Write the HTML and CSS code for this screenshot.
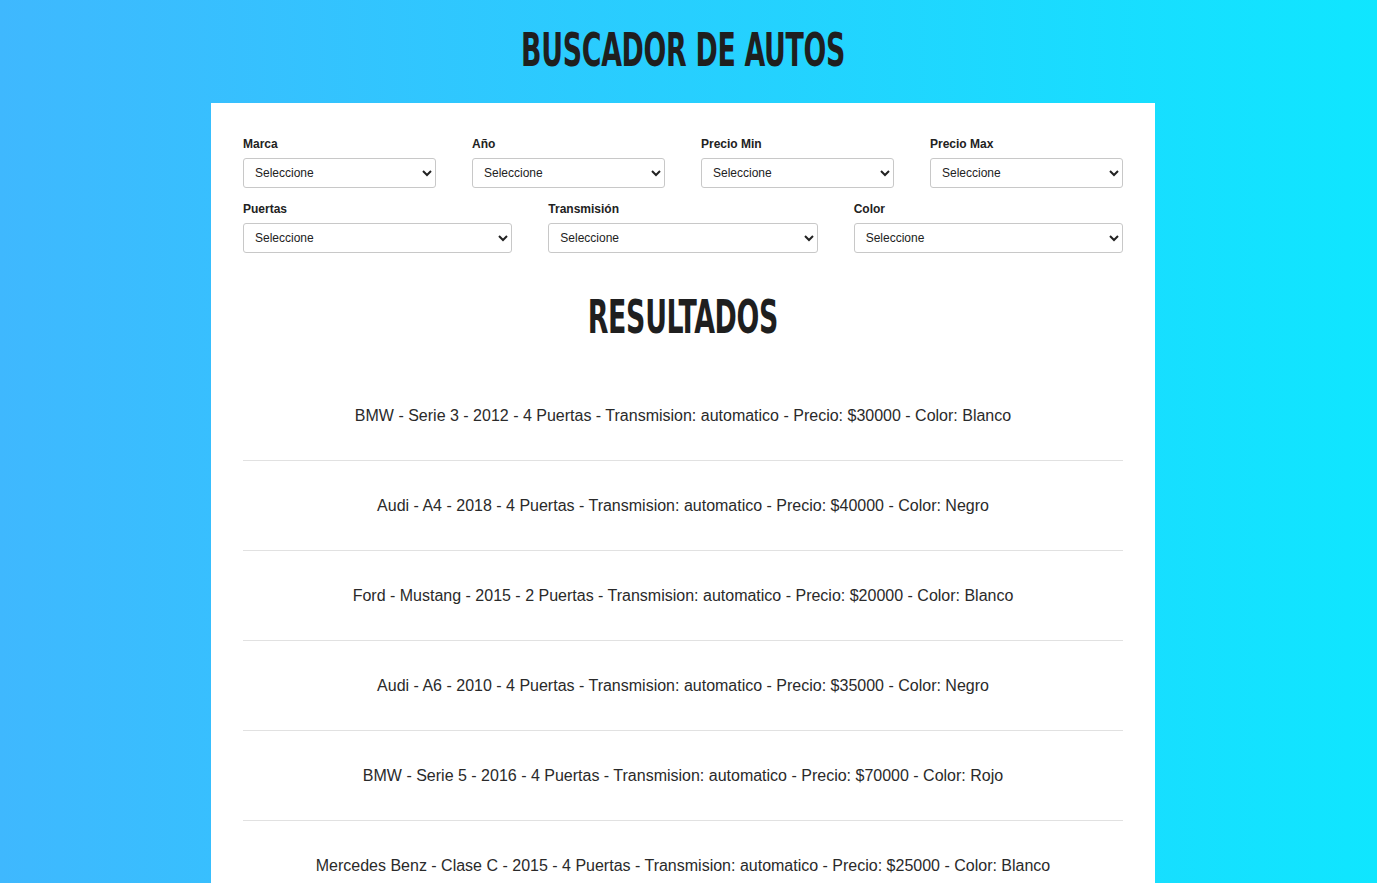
FILE: index.html
```html
<!DOCTYPE html>
<html lang="es">
<head>
<meta charset="utf-8">
<title>Buscador de Autos</title>
<link rel="stylesheet" href="styles.css">
</head>
<body>
<header class="header">
  <h1 class="title"><span class="title-text">Buscador de Autos</span></h1>
</header>
<main class="container">
  <form class="filters">
    <div class="row row-4">
      <div class="field"><label>Marca</label><select><option>Seleccione</option></select></div>
      <div class="field"><label>Año</label><select><option>Seleccione</option></select></div>
      <div class="field"><label>Precio Min</label><select><option>Seleccione</option></select></div>
      <div class="field"><label>Precio Max</label><select><option>Seleccione</option></select></div>
    </div>
    <div class="row row-3">
      <div class="field"><label>Puertas</label><select><option>Seleccione</option></select></div>
      <div class="field"><label>Transmisión</label><select><option>Seleccione</option></select></div>
      <div class="field"><label>Color</label><select><option>Seleccione</option></select></div>
    </div>
  </form>
  <h2 class="subtitle"><span class="title-text">Resultados</span></h2>
  <div class="results">
    <p class="result">BMW - Serie 3 - 2012 - 4 Puertas - Transmision: automatico - Precio: $30000 - Color: Blanco</p>
    <p class="result">Audi - A4 - 2018 - 4 Puertas - Transmision: automatico - Precio: $40000 - Color: Negro</p>
    <p class="result">Ford - Mustang - 2015 - 2 Puertas - Transmision: automatico - Precio: $20000 - Color: Blanco</p>
    <p class="result">Audi - A6 - 2010 - 4 Puertas - Transmision: automatico - Precio: $35000 - Color: Negro</p>
    <p class="result">BMW - Serie 5 - 2016 - 4 Puertas - Transmision: automatico - Precio: $70000 - Color: Rojo</p>
    <p class="result">Mercedes Benz - Clase C - 2015 - 4 Puertas - Transmision: automatico - Precio: $25000 - Color: Blanco</p>
  </div>
</main>
</body>
</html>
```
FILE: styles.css
```css
* { box-sizing: border-box; }
html, body { margin: 0; padding: 0; }
body {
  min-height: 100vh;
  padding-right: 11px;
  background: linear-gradient(to right, #3fb8fe 0%, #0fe6ff 100%);
  font-family: "Liberation Sans", Arial, sans-serif;
  color: #222;
}
.header {
  height: 103px;
  display: flex;
  justify-content: center;
  padding-top: 26px;
}
.title, .subtitle {
  margin: 0;
  font-family: "DejaVu Sans Condensed", "Liberation Sans", sans-serif;
  font-weight: 700;
  text-transform: uppercase;
  color: #1f1f1f;
  font-size: 47px;
  line-height: 48px;
  text-align: center;
}
.title-text {
  display: inline-block;
  transform: scaleX(0.635);
  letter-spacing: -0.5px;
}
.container {
  width: 944px;
  margin: 0 auto;
  background: #fff;
  padding: 34px 32px 0;
}
.row {
  display: grid;
  column-gap: 36px;
}
.row-4 { grid-template-columns: repeat(4, 1fr); margin-bottom: 14px; }
.row-3 { grid-template-columns: repeat(3, 1fr); }
.row-3 select { height: 31px; }
.field { display: flex; flex-direction: column; }
.field label {
  font-size: 12px;
  font-weight: 700;
  color: #222;
  line-height: 14px;
  margin-bottom: 7px;
}
.field select {
  height: 30px;
  font-family: "Liberation Sans", Arial, sans-serif;
  font-size: 12px;
  color: #222;
  padding: 0 7px;
  border: 1px solid #c8c8c8;
  border-radius: 3px;
  background: #fff;
}
.subtitle {
  margin-top: 40px;
  margin-bottom: 0;
}
.results { padding-top: 30px; }
.result {
  margin: 0;
  padding: 35px 0;
  line-height: 19px;
  font-size: 16px;
  color: #2a2a2a;
  text-align: center;
  border-bottom: 1px solid #e1e1e1;
}
```
